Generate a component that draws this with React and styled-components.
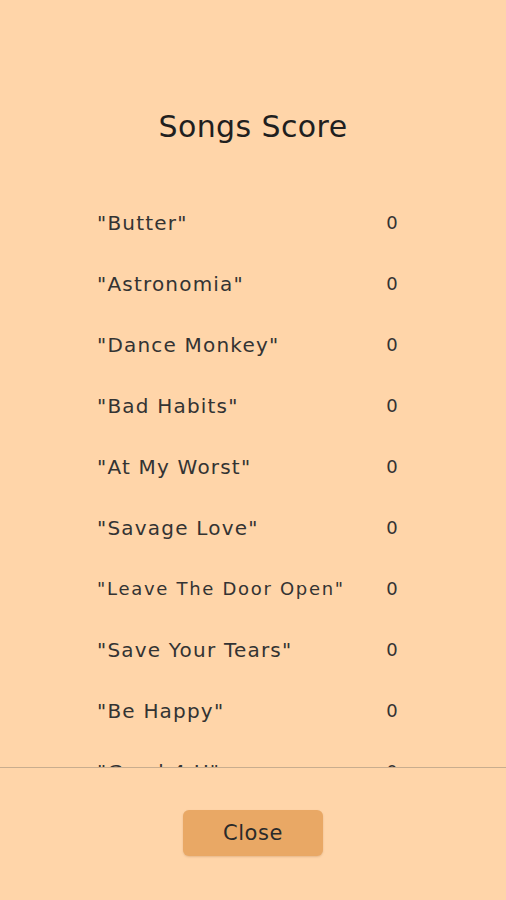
import React from 'react';
import styled, { createGlobalStyle } from 'styled-components';

const GlobalStyle = createGlobalStyle`
  html, body {
    margin: 0;
    padding: 0;
    background: #ffd5a9;
  }
  * { box-sizing: border-box; }
`

const songs = [
  ['"Butter"', 0],
  ['"Astronomia"', 0],
  ['"Dance Monkey"', 0],
  ['"Bad Habits"', 0],
  ['"At My Worst"', 0],
  ['"Savage Love"', 0],
  ['"Leave The Door Open"', 0],
  ['"Save Your Tears"', 0],
  ['"Be Happy"', 0],
  ['"Good 4 U"', 0],
  ['"Peaches"', 0],
]

const Screen = styled.div`
  height: 900px;
  display: flex;
  flex-direction: column;
  background: #ffd5a9;
  color: #2f2f2f;
  font-family: 'DejaVu Sans', 'Noto Sans', sans-serif;
`

const Title = styled.h1`
  margin: 0;
  padding-top: 106px;
  height: 192px;
  text-align: center;
  font-size: 30px;
  font-weight: 400;
  line-height: 42px;
  letter-spacing: 0.4px;
  color: #1f1f1f;
`

const ScoreList = styled.div`
  flex: 1;
  overflow: hidden;
  border-bottom: 1px solid #c9ad8e;
  padding: 0 107px 0 97px;
`

const Row = styled.div`
  height: 61px;
  display: flex;
  align-items: center;
  justify-content: space-between;
  color: #333;
`

const SongName = styled.span`
  font-size: ${props => (props.long ? '18px' : '20px')};
  letter-spacing: ${props => (props.long ? '1.7px' : '1.2px')};
`

const Score = styled.span`
  width: 14px;
  text-align: center;
  font-size: 18px;
`

const Footer = styled.div`
  height: 132px;
  display: flex;
  justify-content: center;
  padding-top: 42px;
`

const CloseButton = styled.button`
  width: 140px;
  height: 46px;
  border: none;
  border-radius: 6px;
  background: #e9a865;
  color: #2a2a2a;
  font-family: inherit;
  font-size: 21px;
  line-height: 46px;
  letter-spacing: 0.6px;
  padding: 0;
  box-shadow: 0 1px 2px rgba(150, 100, 50, 0.25);
  cursor: pointer;
`

export default function App() {
  return (
    <>
      <GlobalStyle />
      <Screen>
        <Title>Songs Score</Title>
        <ScoreList>
          {songs.map(([name, score]) => (
            <Row key={name}>
              <SongName long={name.length > 18}>{name}</SongName>
              <Score>{score}</Score>
            </Row>
          ))}
        </ScoreList>
        <Footer>
          <CloseButton>Close</CloseButton>
        </Footer>
      </Screen>
    </>
  )
}
